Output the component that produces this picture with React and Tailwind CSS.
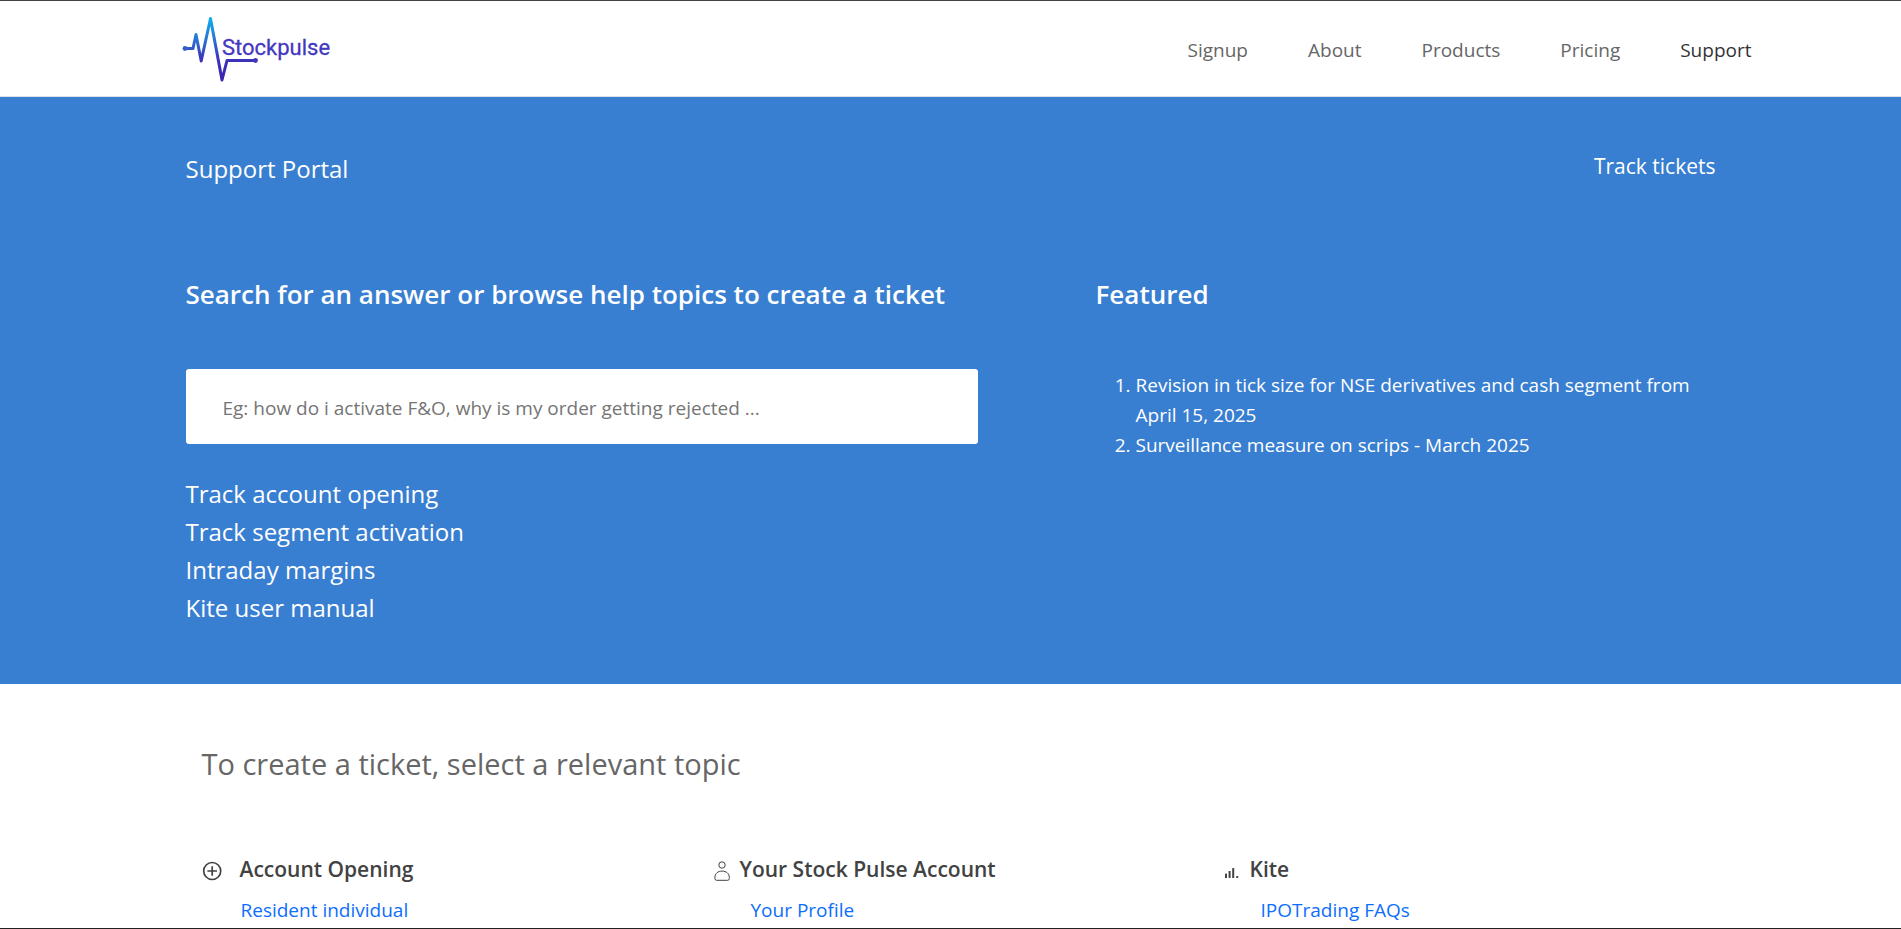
const navItems = ["Signup", "About", "Products", "Pricing", "Support"];

const quickLinks = [
  "Track account opening",
  "Track segment activation",
  "Intraday margins",
  "Kite user manual",
];

const featured = [
  "Revision in tick size for NSE derivatives and cash segment from April 15, 2025",
  "Surveillance measure on scrips - March 2025",
];

function Logo() {
  return (
    <svg className="h-[72px] w-[150px]" viewBox="0 0 150 72" role="img" aria-label="Stockpulse">
      <defs>
        <linearGradient id="pulse" gradientUnits="userSpaceOnUse" x1="0" y1="3" x2="0" y2="67">
          <stop offset="0" stopColor="#0fb4ee" />
          <stop offset="0.45" stopColor="#2f63cc" />
          <stop offset="0.65" stopColor="#3d36bd" />
          <stop offset="1" stopColor="#3a22ae" />
        </linearGradient>
      </defs>
      <path
        d="M3.5 35.5H11L14 21.5L19.2 48L28.5 5.5L40 67L45 47.5H73.5"
        fill="none"
        stroke="url(#pulse)"
        strokeWidth="3"
        strokeLinejoin="round"
        strokeLinecap="round"
      />
      <circle cx="3" cy="35.5" r="2.4" fill="#2f63cc" />
      <circle cx="73.5" cy="47.5" r="2.4" fill="#4034bc" />
      <text x="40" y="42" fill="#4338c0" stroke="#4338c0" strokeWidth="0.3" fontFamily="Roboto, sans-serif" fontSize="22">
        Stockpulse
      </text>
    </svg>
  );
}

function PlusCircleIcon() {
  return (
    <svg className="mt-[3px] size-5" viewBox="0 0 20 20" fill="none" stroke="#424242" strokeWidth="1.7" aria-hidden="true">
      <circle cx="10.2" cy="10" r="8.5" />
      <path d="M10.2 5.2V14.8M5.4 10H15" />
    </svg>
  );
}

function PersonIcon() {
  return (
    <svg className="mt-[3px] size-5" viewBox="0 0 20 20" fill="none" stroke="#424242" strokeWidth="1" aria-hidden="true">
      <circle cx="10" cy="4" r="3.2" />
      <path d="M4.5 19.3Q2.9 19.3 2.9 17.5V16.3C2.9 12.6 5.9 10.1 10.1 10.1S17.3 12.6 17.3 16.3V17.5Q17.3 19.3 15.7 19.3Z" />
    </svg>
  );
}

function BarsIcon() {
  return (
    <svg className="mt-[3px] size-5" viewBox="0 0 20 20" fill="#424242" aria-hidden="true">
      <rect x="3" y="12.5" width="2" height="4.5" rx="0.6" />
      <rect x="6.6" y="10" width="2" height="7" rx="0.6" />
      <rect x="10.2" y="7" width="2" height="10" rx="0.6" />
      <rect x="14.2" y="15" width="2" height="2" rx="0.6" />
    </svg>
  );
}

const topics = [
  { title: "Account Opening", link: "Resident individual", Icon: PlusCircleIcon, gap: "gap-[18px]" },
  { title: "Your Stock Pulse Account", link: "Your Profile", Icon: PersonIcon, gap: "gap-2" },
  { title: "Kite", link: "IPOTrading FAQs", Icon: BarsIcon, gap: "gap-2" },
];

export default function App() {
  return (
    <div className="flex h-screen flex-col overflow-hidden border-t border-b border-t-[#424242] border-b-[#212121] bg-white font-['Open_Sans',sans-serif] text-[#424242]">
      <header className="shrink-0 border-b border-[#dee2e6] px-6">
        <div className="mx-auto flex h-[95px] max-w-[1602px] items-center justify-between pl-8">
          <a href="#home">
            <Logo />
          </a>
          <nav className="flex gap-[60px] pt-0.5 text-[19px] leading-[30px]">
            {navItems.map((item) => (
              <a
                key={item}
                href={"#" + item.toLowerCase()}
                className={item === "Support" ? "text-[#333333]" : "text-[#666666]"}
              >
                {item}
              </a>
            ))}
          </nav>
        </div>
      </header>

      <section className="shrink-0 bg-[#387ed1] px-6 pt-[50px] pb-[57px] text-white">
        <div className="mx-auto max-w-[1530px]">
          <div className="flex items-start justify-between">
            <h1 className="pt-1 text-[24px] leading-[36px]">Support Portal</h1>
            <a href="#tickets" className="text-[21px] leading-[38px]">Track tickets</a>
          </div>
          <div className="mt-[89px] grid grid-cols-[792fr_620fr] gap-x-[118px]">
            <div>
              <h2 className="text-[26px] leading-[36px] font-semibold">
                <label htmlFor="search">Search for an answer or browse help topics to create a ticket</label>
              </h2>
              <input
                id="search"
                type="text"
                placeholder="Eg: how do i activate F&O, why is my order getting rejected ..."
                className="mt-[57px] block h-[75px] w-full rounded-[3px] bg-white pt-0.5 pl-[37px] text-[19px] text-[#424242] placeholder:text-[#757575]"
              />
              <ul className="mt-[31px] text-[24px] leading-[38px]">
                {quickLinks.map((text) => (
                  <li key={text}>
                    <a href="#topic">{text}</a>
                  </li>
                ))}
              </ul>
            </div>
            <div>
              <h2 className="text-[26px] leading-[36px] font-semibold">Featured</h2>
              <ol className="mt-[58px] list-decimal pl-10 text-[19px] leading-[30px]">
                {featured.map((text) => (
                  <li key={text}>
                    <a href="#featured">{text}</a>
                  </li>
                ))}
              </ol>
            </div>
          </div>
        </div>
      </section>

      <section className="shrink-0 px-6 pt-[60px]">
        <div className="mx-auto max-w-[1530px]">
          <h2 className="px-4 text-[29px] leading-[40px] text-[#666666]">To create a ticket, select a relevant topic</h2>
          <div className="mt-[67px] grid grid-cols-3">
            {topics.map(({ title, link, Icon, gap }) => (
              <div key={title} className="px-4">
                <h3 className={"flex items-center text-[21px] leading-[36px] font-semibold " + gap}>
                  <Icon />
                  {title}
                </h3>
                <a href="#topic" className="mt-[5px] block pl-[39px] text-[19px] leading-[36px] text-[#0d6efd]">
                  {link}
                </a>
              </div>
            ))}
          </div>
        </div>
      </section>
    </div>
  );
}
